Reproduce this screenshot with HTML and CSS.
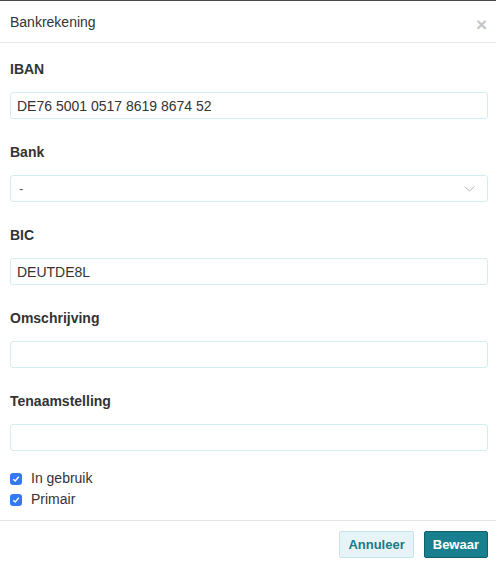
FILE: index.html
```html
<!DOCTYPE html>
<html lang="nl">
  <head>
    <meta charset="UTF-8" />
    <meta name="viewport" content="width=device-width, initial-scale=1.0" />
    <title>Bankrekening</title>
    <link rel="stylesheet" href="styles.css">
  </head>
  <body>
    <div class="modal">
      <div class="modal-header">
        <span class="modal-title">Bankrekening</span>
        <span class="close">&times;</span>
      </div>

      <div class="modal-body">
        <div class="form-group">
          <label for="iban">IBAN</label>
          <input type="text" id="iban" value="DE76 5001 0517 8619 8674 52" />
        </div>

        <div class="form-group">
          <label>Bank</label>
          <div class="select">
            <span>-</span>
            <svg width="11" height="6" viewBox="0 0 11 6">
              <polyline points="0.5,0.5 5.5,5 10.5,0.5" fill="none" stroke="#b4b4c4" stroke-width="1" />
            </svg>
          </div>
        </div>

        <div class="form-group">
          <label for="bic">BIC</label>
          <input type="text" id="bic" value="DEUTDE8L" />
        </div>

        <div class="form-group">
          <label for="omschrijving">Omschrijving</label>
          <input type="text" id="omschrijving" />
        </div>

        <div class="form-group">
          <label for="tenaamstelling">Tenaamstelling</label>
          <input type="text" id="tenaamstelling" />
        </div>

        <div class="checks">
          <div class="check-row">
            <span class="check">
              <svg width="8" height="8" viewBox="0 0 8 8">
                <polyline points="1.3,4.2 3.2,6 6.8,1.8" fill="none" stroke="#fff" stroke-width="1.4" />
              </svg>
            </span>
            In gebruik
          </div>
          <div class="check-row">
            <span class="check">
              <svg width="8" height="8" viewBox="0 0 8 8">
                <polyline points="1.3,4.2 3.2,6 6.8,1.8" fill="none" stroke="#fff" stroke-width="1.4" />
              </svg>
            </span>
            Primair
          </div>
        </div>
      </div>

      <div class="modal-footer">
        <button class="btn btn-light">Annuleer</button>
        <button class="btn btn-primary">Bewaar</button>
      </div>
    </div>
  </body>
</html>
```

FILE: styles.css
```css
body {
  margin: 0;
  font-family: "Liberation Sans", Arial, sans-serif;
  font-size: 14px;
  color: #333;
  background: #fff;
}
.modal {
  border-top: 1px solid #4a4a4a;
}
.modal-header {
  display: flex;
  justify-content: space-between;
  align-items: center;
  padding: 11px 9px 10px 10px;
  line-height: 20px;
  border-bottom: 1px solid #e5e5e5;
}
.close {
  margin: 3px 0 -3px;
  font-size: 19px;
  font-weight: bold;
  color: #c6c6c6;
  line-height: 20px;
}
.modal-body {
  padding: 16px 8px 10px 10px;
}
.form-group + .form-group {
  margin-top: 23px;
}
label {
  display: block;
  font-weight: bold;
  line-height: 20px;
  margin-bottom: 13px;
}
input,
.select {
  display: block;
  width: 100%;
  height: 27px;
  box-sizing: border-box;
  padding: 0 6px;
  border: 1px solid #d3ecf2;
  border-radius: 3px;
  font-family: inherit;
  font-size: 14px;
  color: #333;
  outline: none;
}
.select {
  display: flex;
  align-items: center;
  justify-content: space-between;
  padding: 0 12px 0 8px;
}
.select span {
  color: #555;
  font-size: 13px;
}
.checks {
  margin-top: 17px;
}
.check-row {
  display: flex;
  align-items: center;
  gap: 9px;
  line-height: 21px;
}
.check {
  display: flex;
  align-items: center;
  justify-content: center;
  width: 12px;
  height: 12px;
  border-radius: 3px;
  background: #3479f1;
}
.modal-footer {
  display: flex;
  justify-content: flex-end;
  gap: 10px;
  padding: 10px 8px 10px 10px;
  border-top: 1px solid #e5e5e5;
}
.btn {
  height: 27px;
  padding: 0 8px;
  border-radius: 2px;
  font-family: inherit;
  font-size: 13px;
  font-weight: bold;
  cursor: pointer;
}
.btn-light {
  background: #e6f4f8;
  border: 1px solid #c6e4ec;
  color: #1a7a88;
}
.btn-primary {
  background: #177f8d;
  border: 1px solid #10606b;
  color: #fff;
}
```
